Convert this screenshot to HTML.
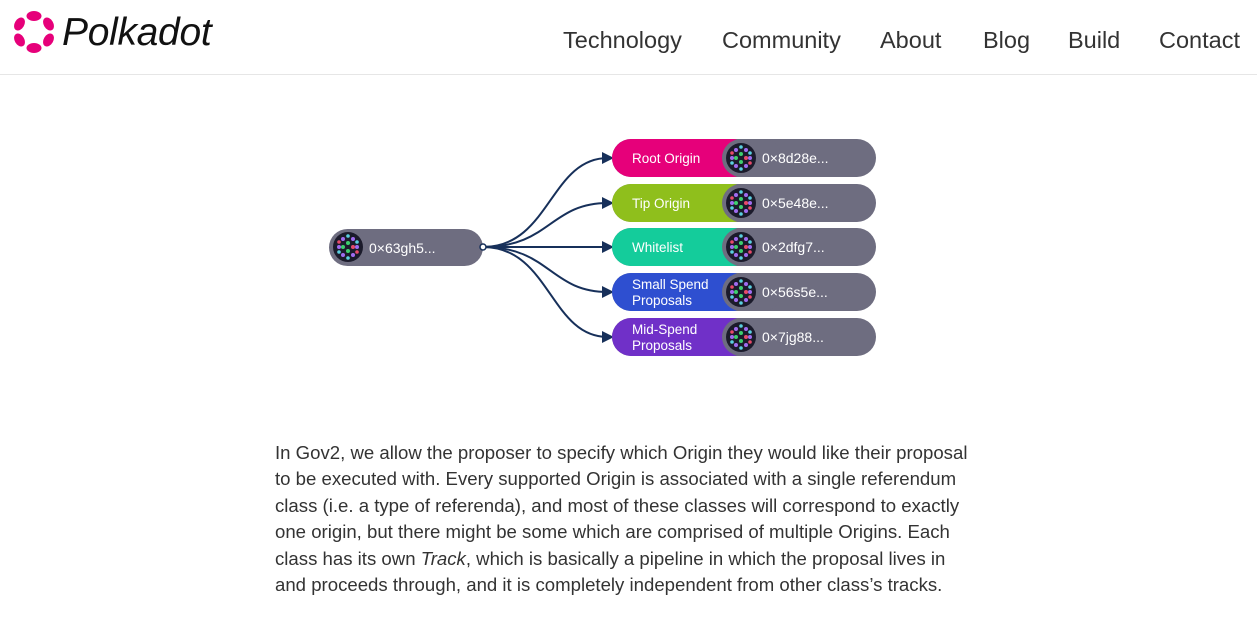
<!DOCTYPE html>
<html><head><meta charset="utf-8"><style>
body{margin:0;width:1257px;height:618px;background:#fff;font-family:"Liberation Sans",sans-serif;overflow:hidden;position:relative}
.hdr{position:absolute;left:0;top:0;width:1257px;height:74px;border-bottom:1px solid #e6e6e6}
.logo{position:absolute;left:62px;top:11px;font-size:39px;font-style:italic;color:#111;letter-spacing:-0.3px}
.nav{position:absolute;top:27px;font-size:23.5px;color:#333}
p{position:absolute;left:275px;top:440px;width:760px;margin:0;font-size:18.6px;line-height:26.4px;color:#333;white-space:nowrap}
</style></head><body>
<div class="hdr">
<svg style="position:absolute;left:12px;top:10px" width="44" height="44" viewBox="0 0 44 44">
<g fill="#e6007a">
<ellipse cx="22" cy="6" rx="7.5" ry="5"/><ellipse cx="22" cy="38" rx="7.5" ry="5"/>
<ellipse cx="7.5" cy="14" rx="7" ry="4.8" transform="rotate(-60 7.5 14)"/>
<ellipse cx="36.5" cy="14" rx="7" ry="4.8" transform="rotate(60 36.5 14)"/>
<ellipse cx="7.5" cy="30" rx="7" ry="4.8" transform="rotate(60 7.5 30)"/>
<ellipse cx="36.5" cy="30" rx="7" ry="4.8" transform="rotate(-60 36.5 30)"/>
</g></svg>
<div class="logo">Polkadot</div>
<div class="nav" style="left:563px">Technology</div>
<div class="nav" style="left:722px">Community</div>
<div class="nav" style="left:880px">About</div>
<div class="nav" style="left:983px">Blog</div>
<div class="nav" style="left:1068px">Build</div>
<div class="nav" style="left:1159px">Contact</div>
</div>
<svg style="position:absolute;left:0;top:0" width="1257" height="618" font-family="Liberation Sans, sans-serif">
<defs><g id="av"><circle r="15" fill="#1b1b2b"/>
<g fill="#a06cf0"><circle cx="-5" cy="-8" r="2"/><circle cx="5" cy="-8" r="2"/><circle cx="-9" cy="0" r="2"/><circle cx="9" cy="0" r="2"/><circle cx="-5" cy="8" r="2"/><circle cx="5" cy="8" r="2"/></g>
<g fill="#3ecf6e"><circle cx="0" cy="-4" r="2"/><circle cx="0" cy="4" r="2"/><circle cx="-5" cy="0" r="2"/></g>
<g fill="#e84a6a"><circle cx="5" cy="0" r="2"/><circle cx="-9" cy="-5" r="1.8"/><circle cx="9" cy="5" r="1.8"/></g>
<g fill="#5ad0e0"><circle cx="9" cy="-5" r="1.8"/><circle cx="-9" cy="5" r="1.8"/><circle cx="0" cy="-11" r="1.8"/><circle cx="0" cy="11" r="1.8"/></g></g></defs>
<g fill="none" stroke="#17305a" stroke-width="2">
<path d="M483 247 C550 247 550 158 608 158"/><path d="M483 247 C550 247 550 203 608 203"/><path d="M483 247 L608 247"/><path d="M483 247 C550 247 550 292 608 292"/><path d="M483 247 C550 247 550 337 608 337"/>
</g>
<g fill="#17305a"><path d="M614 158 l-12 -6 v12z"/><path d="M614 203 l-12 -6 v12z"/><path d="M614 247 l-12 -6 v12z"/><path d="M614 292 l-12 -6 v12z"/><path d="M614 337 l-12 -6 v12z"/></g>
<rect x="329" y="229" width="154" height="37" rx="18.5" fill="#6e6d80"/>
<circle cx="483" cy="247" r="3" fill="#fff" stroke="#17305a" stroke-width="1.5"/>
<use href="#av" x="348" y="247"/>
<text x="369" y="253" fill="#fff" font-size="14">0×63gh5...</text>
<g font-size="13.5" fill="#fff">
<rect x="612" y="139" width="264" height="38" rx="19" fill="#6e6d80"/><rect x="612" y="139" width="140" height="38" rx="19" fill="#e6007a"/><rect x="722" y="139" width="60" height="38" rx="19" fill="#6e6d80"/><use href="#av" x="741" y="158"/><text x="632" y="163">Root Origin</text><text x="762" y="163" font-size="14">0×8d28e...</text>
<rect x="612" y="184" width="264" height="38" rx="19" fill="#6e6d80"/><rect x="612" y="184" width="140" height="38" rx="19" fill="#8fbf1c"/><rect x="722" y="184" width="60" height="38" rx="19" fill="#6e6d80"/><use href="#av" x="741" y="203"/><text x="632" y="208">Tip Origin</text><text x="762" y="208" font-size="14">0×5e48e...</text>
<rect x="612" y="228" width="264" height="38" rx="19" fill="#6e6d80"/><rect x="612" y="228" width="140" height="38" rx="19" fill="#14cc9b"/><rect x="722" y="228" width="60" height="38" rx="19" fill="#6e6d80"/><use href="#av" x="741" y="247"/><text x="632" y="252">Whitelist</text><text x="762" y="252" font-size="14">0×2dfg7...</text>
<rect x="612" y="273" width="264" height="38" rx="19" fill="#6e6d80"/><rect x="612" y="273" width="140" height="38" rx="19" fill="#2e4fd0"/><rect x="722" y="273" width="60" height="38" rx="19" fill="#6e6d80"/><use href="#av" x="741" y="292"/><text x="632" y="289">Small Spend</text><text x="632" y="305">Proposals</text><text x="762" y="297" font-size="14">0×56s5e...</text>
<rect x="612" y="318" width="264" height="38" rx="19" fill="#6e6d80"/><rect x="612" y="318" width="140" height="38" rx="19" fill="#7030c8"/><rect x="722" y="318" width="60" height="38" rx="19" fill="#6e6d80"/><use href="#av" x="741" y="337"/><text x="632" y="334">Mid-Spend</text><text x="632" y="350">Proposals</text><text x="762" y="342" font-size="14">0×7jg88...</text>
</g>
</svg>
<p>In Gov2, we allow the proposer to specify which Origin they would like their proposal<br>to be executed with. Every supported Origin is associated with a single referendum<br>class (i.e. a type of referenda), and most of these classes will correspond to exactly<br>one origin, but there might be some which are comprised of multiple Origins. Each<br>class has its own <i>Track</i>, which is basically a pipeline in which the proposal lives in<br>and proceeds through, and it is completely independent from other class’s tracks.</p>
</body></html>
